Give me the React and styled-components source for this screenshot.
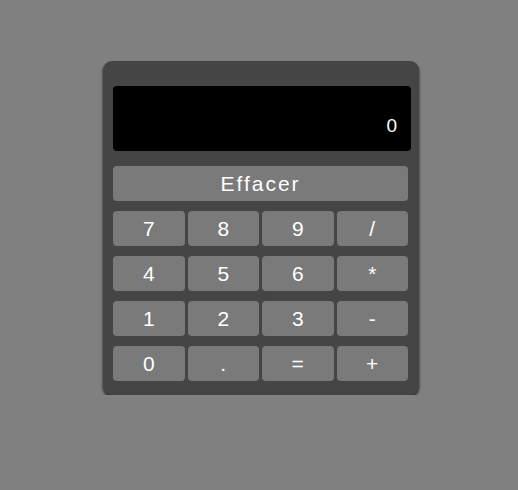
import { useState } from "react";
import styled, { createGlobalStyle } from "styled-components";

const GlobalStyle = createGlobalStyle`
  html, body {
    margin: 0;
    padding: 0;
    background: #808080;
    font-family: "Liberation Sans", Arial, sans-serif;
  }
`;

const Page = styled.div`
  padding: 61px 0 0 103px;
`;

const Calculator = styled.div`
  width: 316px;
  box-sizing: border-box;
  padding: 25px 8px 14px 10px;
  background: #454545;
  border-radius: 9px;
  box-shadow: 0 2px 3px rgba(0, 0, 0, 0.75);
`;

const Display = styled.div`
  width: 298px;
  height: 65px;
  box-sizing: border-box;
  background: #000;
  border-radius: 4px;
  color: #fff;
  font-size: 19px;
  text-align: right;
  padding: 29px 14px 0 0;
`;

const ClearButton = styled.button`
  display: block;
  width: 295px;
  height: 35px;
  margin-top: 15px;
  border: none;
  border-radius: 4px;
  background: #7a7a7a;
  color: #fff;
  font-family: inherit;
  font-size: 21px;
  letter-spacing: 2px;
  cursor: pointer;
`;

const Keys = styled.div`
  width: 295px;
  margin-top: 10px;
  display: grid;
  grid-template-columns: repeat(4, 1fr);
  column-gap: 3px;
  row-gap: 10px;
`;

const Key = styled.button`
  height: 35px;
  border: none;
  border-radius: 4px;
  background: #7a7a7a;
  color: #fff;
  font-family: inherit;
  font-size: 21px;
  padding: 0;
  cursor: pointer;
`;

const keys = ["7", "8", "9", "/", "4", "5", "6", "*", "1", "2", "3", "-", "0", ".", "=", "+"];

export default function App() {
  const [value, setValue] = useState("0");

  const press = (k) => {
    if (k === "=") {
      try {
        // eslint-disable-next-line no-new-func
        setValue(String(Function(`return (${value})`)()));
      } catch (e) {
        setValue("0");
      }
      return;
    }
    setValue(value === "0" && k !== "." ? k : value + k);
  };

  return (
    <>
      <GlobalStyle />
      <Page>
        <Calculator>
          <Display>{value}</Display>
          <ClearButton onClick={() => setValue("0")}>Effacer</ClearButton>
          <Keys>
            {keys.map((k) => (
              <Key key={k} onClick={() => press(k)}>
                {k}
              </Key>
            ))}
          </Keys>
        </Calculator>
      </Page>
    </>
  );
}
